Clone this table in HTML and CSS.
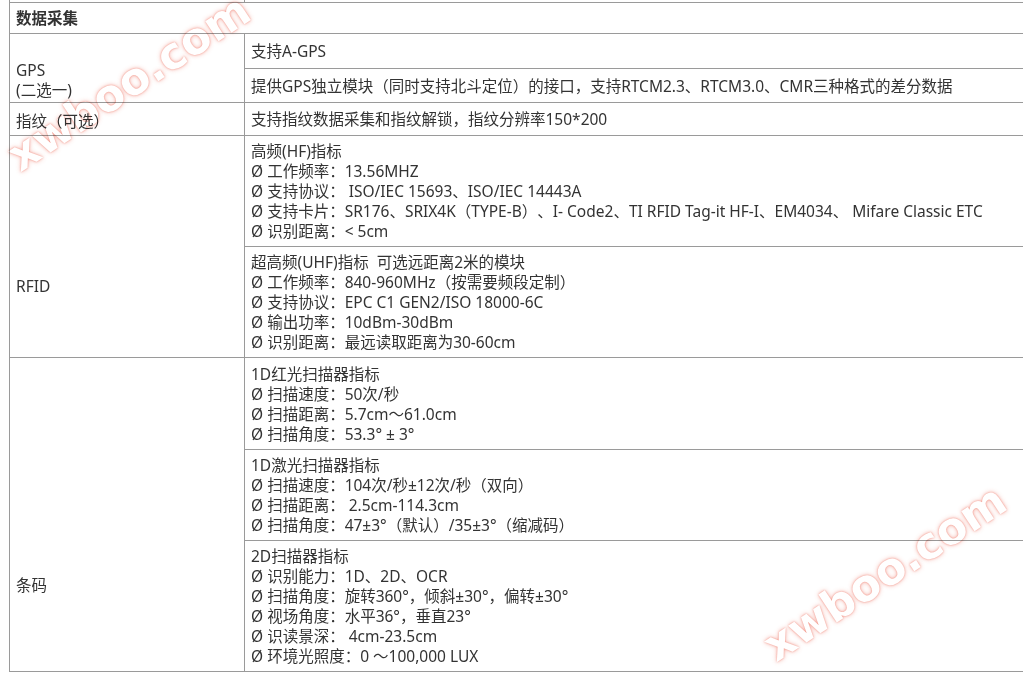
FILE: index.html
```html
<!DOCTYPE html>
<html lang="zh-CN">
<head>
<meta charset="utf-8">
<title>数据采集</title>
<link rel="stylesheet" href="styles.css">
</head>
<body>
<div class="page">
  <table class="spec">
    <colgroup><col class="c1"><col class="c2"></colgroup>
    <tr class="prev"><td></td><td></td></tr>
    <tr class="h31"><td colspan="2" class="section">数据采集</td></tr>
    <tr class="h35"><td rowspan="2" class="lbl lbl-gps">GPS<br>(二选一)</td><td>支持A-GPS</td></tr>
    <tr class="h34"><td>提供GPS独立模块（同时支持北斗定位）的接口，支持RTCM2.3、RTCM3.0、CMR三种格式的差分数据</td></tr>
    <tr class="h33"><td class="lbl lbl-fp">指纹（可选）</td><td>支持指纹数据采集和指纹解锁，指纹分辨率150*200</td></tr>
    <tr class="h111"><td rowspan="2" class="lbl lbl-rfid">RFID</td><td>高频(HF)指标<br>Ø 工作频率：13.56MHZ<br>Ø 支持协议： ISO/IEC 15693、ISO/IEC 14443A<br>Ø 支持卡片：SR176、SRIX4K（TYPE-B）、I- Code2、TI RFID Tag-it HF-I、EM4034、 Mifare Classic ETC<br>Ø 识别距离：&lt; 5cm</td></tr>
    <tr class="h110"><td>超高频(UHF)指标&nbsp; 可选远距离2米的模块<br>Ø 工作频率：840-960MHz（按需要频段定制）<br>Ø 支持协议：EPC C1 GEN2/ISO 18000-6C<br>Ø 输出功率：10dBm-30dBm<br>Ø 识别距离：最远读取距离为30-60cm</td></tr>
    <tr class="h92"><td rowspan="3" class="lbl lbl-code">条码</td><td>1D红光扫描器指标<br>Ø 扫描速度：50次/秒<br>Ø 扫描距离：5.7cm～61.0cm<br>Ø 扫描角度：53.3° ± 3°</td></tr>
    <tr class="h91"><td>1D激光扫描器指标<br>Ø 扫描速度：104次/秒±12次/秒（双向）<br>Ø 扫描距离： 2.5cm-114.3cm<br>Ø 扫描角度：47±3°（默认）/35±3°（缩减码）</td></tr>
    <tr class="h131"><td>2D扫描器指标<br>Ø 识别能力：1D、2D、OCR<br>Ø 扫描角度：旋转360°，倾斜±30°，偏转±30°<br>Ø 视场角度：水平36°，垂直23°<br>Ø 识读景深： 4cm-23.5cm<br>Ø 环境光照度：0 ～100,000 LUX</td></tr>
  </table>
  <div class="wm wm1">xwboo.com</div>
  <div class="wm wm2">xwboo.com</div>
</div>
</body>
</html>
```

FILE: styles.css
```css
html, body {
  margin: 0;
  padding: 0;
  background: #fff;
  overflow: hidden;
}
.page {
  position: relative;
  width: 1023px;
  height: 675px;
  overflow: hidden;
  padding-left: 9px;
  box-sizing: border-box;
  background: #fff;
}
.spec {
  border-collapse: collapse;
  width: 1100px;
  margin-top: -29px;
  font-family: "Noto Sans", "Noto Sans CJK JP", sans-serif;
  font-size: 15.5px;
  line-height: 20px;
  color: #333;
  table-layout: fixed;
  text-spacing-trim: space-all;
}
.c1 { width: 235px; }
.spec td {
  border: 1px solid #9a9a9a;
  padding: 5px 6px;
  vertical-align: middle;
  text-align: left;
}
.spec .section { font-weight: bold; }
.spec .lbl { vertical-align: top; padding-bottom: 0; }
.spec .lbl-gps { padding-top: 26px; }
.spec .lbl-fp { padding-top: 8px; }
.spec .lbl-rfid { padding-top: 140px; }
.spec .lbl-code { padding-top: 217px; }
.prev { height: 31px; }
.h31 { height: 31px; }
.h33 { height: 33px; }
.h34 { height: 34px; }
.h35 { height: 35px; }
.h91 { height: 91px; }
.h92 { height: 92px; }
.h110 { height: 110px; }
.h111 { height: 111px; }
.h131 { height: 131px; }
.wm {
  position: absolute;
  font-family: "DejaVu Sans", sans-serif;
  font-weight: bold;
  font-size: 44px;
  line-height: 50px;
  color: #fff;
  mix-blend-mode: multiply;
  text-shadow: 0 0 2px rgba(235, 85, 65, 0.6), 0 0 5px rgba(235, 95, 75, 0.45);
  transform: rotate(-33.5deg);
  transform-origin: left center;
  white-space: nowrap;
  pointer-events: none;
}
.wm1 { left: 12px; top: 135px; }
.wm2 { left: 768px; top: 625px; }
```
